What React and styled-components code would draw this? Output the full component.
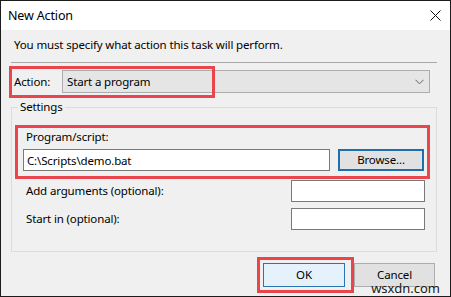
import React from 'react';
import styled, { createGlobalStyle } from 'styled-components';

const GlobalStyle = createGlobalStyle`
  html, body {
    margin: 0;
    padding: 0;
    background: #fff;
  }
  body {
    font-family: "Segoe UI", "Noto Sans", sans-serif;
    font-size: 11.5px;
    letter-spacing: -0.15px;
    color: #000;
  }
`;

const RED = '#e8464c';

const Window = styled.div`
  position: relative;
  width: 451px;
  height: 297px;
  box-sizing: border-box;
  border: 1px solid #1c1c1c;
  background: #f0f0f0;
  display: flex;
  flex-direction: column;
  overflow: hidden;
`;

const TitleBar = styled.div`
  height: 29px;
  flex: none;
  background: #fff;
  display: flex;
  align-items: center;
  justify-content: space-between;
  padding: 0 9px 0 7px;
  font-size: 12.5px;
`;

const Body = styled.div`
  flex: 1;
  display: flex;
  flex-direction: column;
  padding: 0 13px 0 10px;
`;

const Intro = styled.div`
  margin: 7px 0 0 3px;
  line-height: 16px;
`;

const Separator = styled.div`
  height: 1px;
  background: #a8a8a8;
  margin-top: 9px;
`;

const ActionRow = styled.div`
  position: relative;
  display: flex;
  align-items: center;
  margin: 7px 7px 0 3px;
`;

const Label = styled.span`
  width: ${p => p.$width || 'auto'};
  flex: none;
  line-height: 16px;
`;

const Select = styled.div`
  flex: 1;
  height: 23px;
  box-sizing: border-box;
  border: 1px solid #adadad;
  background: #e5e5e5;
  display: flex;
  align-items: center;
  justify-content: space-between;
  padding: 0 5px 0 4px;
`;

const Mark = styled.div`
  position: absolute;
  inset: ${p => p.$inset};
  border: 3px solid ${RED};
  pointer-events: none;
`;

const Group = styled.fieldset`
  margin: 6px 0 0 0;
  padding: 0 0 21px 0;
  border: 1px solid #dcdcdc;
  min-width: 0;
`;

const Legend = styled.legend`
  margin-left: 6px;
  padding: 0 2px;
  line-height: 16px;
`;

const ProgramBox = styled.div`
  margin: 10px 6px 0 3px;
  border: 3px solid ${RED};
  padding: 0 3px 5px 5px;
  display: flex;
  flex-direction: column;
`;

const ProgramLabel = styled.div`
  line-height: 16px;
  padding: 1px 0 0 3px;
`;

const InputRow = styled.div`
  display: flex;
  align-items: center;
  gap: 8px;
  margin-top: 4px;
`;

const TextBox = styled.div`
  width: ${p => p.$width || 'auto'};
  flex: ${p => (p.$grow ? 1 : 'none')};
  height: 22px;
  box-sizing: border-box;
  border: 1px solid #7a7a7a;
  background: #fff;
  display: flex;
  align-items: center;
  padding: 0 3px;
  white-space: nowrap;
`;

const Button = styled.div`
  width: ${p => p.$width}px;
  height: ${p => p.$height || 22}px;
  flex: none;
  box-sizing: border-box;
  display: flex;
  align-items: center;
  justify-content: center;
  line-height: 14px;
  background: ${p => (p.$primary ? '#e5f1fb' : '#e1e1e1')};
  border: ${p => p.$border || '1px solid #adadad'};
`;

const FieldRow = styled.div`
  display: flex;
  align-items: center;
  justify-content: space-between;
  margin: ${p => p.$top}px 11px 0 14px;
`;

const Footer = styled.div`
  display: flex;
  justify-content: flex-end;
  gap: 9px;
  margin-top: 11px;
  padding-right: 2px;
`;

const Marked = styled.div`
  position: relative;
  display: flex;
`;

const Watermark = styled.div`
  position: absolute;
  right: 10px;
  bottom: 1px;
  font-family: "Noto Sans", sans-serif;
  font-size: 13px;
  letter-spacing: 0;
  line-height: 13px;
  color: #1a1a1a;
`;

function CloseIcon() {
  return (
    <svg width="11" height="11" viewBox="0 0 11 11">
      <path d="M0.5 0.5 L10.5 10.5 M10.5 0.5 L0.5 10.5" stroke="#111" strokeWidth="1" fill="none" />
    </svg>
  );
}

function Chevron() {
  return (
    <svg width="9" height="6" viewBox="0 0 9 6">
      <polyline points="0.5,0.8 4.5,4.8 8.5,0.8" stroke="#606060" strokeWidth="1" fill="none" />
    </svg>
  );
}

export default function App() {
  return (
    <>
      <GlobalStyle />
      <Window>
        <TitleBar>
          <span>New Action</span>
          <CloseIcon />
        </TitleBar>
        <Body>
          <Intro>You must specify what action this task will perform.</Intro>
          <Separator />
          <ActionRow>
            <Label $width="48px">Action:</Label>
            <Select>
              <span>Start a program</span>
              <Chevron />
            </Select>
            <Mark $inset="-4px auto -5px -5px" style={{ width: 200 }} />
          </ActionRow>
          <Group>
            <Legend>Settings</Legend>
            <ProgramBox>
              <ProgramLabel>Program/script:</ProgramLabel>
              <InputRow>
                <TextBox $grow>C:\Scripts\demo.bat</TextBox>
                <Button $width={86} $height={22} $border="2px solid #1f6fae">Browse...</Button>
              </InputRow>
            </ProgramBox>
            <FieldRow $top={1}>
              <Label>Add arguments (optional):</Label>
              <TextBox $width="134px" />
            </FieldRow>
            <FieldRow $top={6}>
              <Label>Start in (optional):</Label>
              <TextBox $width="134px" />
            </FieldRow>
          </Group>
          <Footer>
            <Marked>
              <Button $width={82} $height={24} $primary $border="1px solid #2a74b4">OK</Button>
              <Mark $inset="-6px -9px -6px -6px" />
            </Marked>
            <Button $width={81} $height={24}>Cancel</Button>
          </Footer>
        </Body>
        <Watermark>wsxdn.com</Watermark>
      </Window>
    </>
  );
}
